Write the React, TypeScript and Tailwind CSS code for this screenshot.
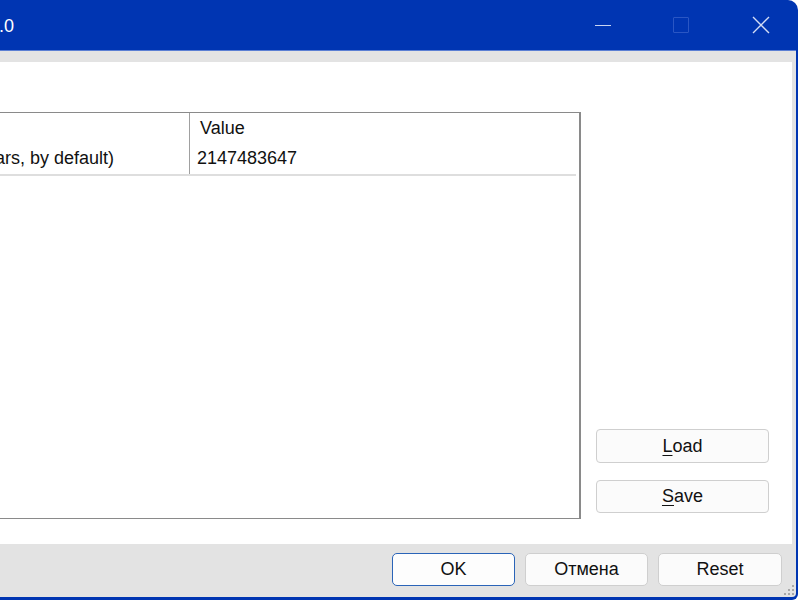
import React from "react";

export default function App() {
  return (
    <div className="w-[800px] h-[600px] bg-white overflow-hidden font-['Liberation_Sans',Arial,sans-serif] text-[#111]">
      <div className="w-[798px] h-[600px] bg-[#0035b2] rounded-tr-[10px] rounded-br-[6px] flex flex-col">
        {/* Title bar */}
        <div className="h-[50px] flex items-center relative shrink-0">
          <span className="text-white text-[18px] leading-none ml-[-1px] mt-[2px]">.0</span>
          <div className="ml-auto flex items-center h-full">
            <div className="w-[78px] h-full flex items-center justify-center">
              <div className="w-[16px] h-[1.5px] bg-[#c9d5f2] mt-[1px]" />
            </div>
            <div className="w-[78px] h-full flex items-center justify-center">
              <div className="w-[16px] h-[16px] border border-[#2a56c4] rounded-[1px]" />
            </div>
            <div className="w-[82px] h-full flex items-center justify-center mr-[-4px]">
              <svg width="18" height="18" viewBox="0 0 18 18">
                <path d="M1 1 L17 17 M17 1 L1 17" stroke="#d3ddf5" strokeWidth="1.4" fill="none" />
              </svg>
            </div>
          </div>
        </div>
        {/* Body */}
        <div className="flex-1 flex flex-col bg-[#e3e3e3] border-t border-[#5b7fd3] mr-[2px] mb-[3px] rounded-br-[4px] relative">
          <div className="h-[11px] shrink-0" />
          <div className="flex-1 bg-white mr-[4px] flex">
            {/* Table */}
            <div className="w-[581px] h-[407px] mt-[50px] border-t border-b border-r-2 border-t-[#8a8a8a] border-b-[#8a8a8a] border-r-[#8a8a8a] flex flex-col shrink-0">
              <div className="flex flex-col">
                <div className="flex h-[30px] text-[18px]">
                  <div className="w-[190px] border-r border-[#a0a0a0]" />
                  <div className="flex items-center pl-[10px] pt-[1px]">Value</div>
                </div>
                <div className="flex h-[31px] text-[18px]">
                  <div className="w-[190px] border-r border-[#a0a0a0] flex items-center whitespace-nowrap">
                    <span className="ml-[-5px]">ars, by default)</span>
                  </div>
                  <div className="flex items-center pl-[7px]">2147483647</div>
                </div>
                <div className="h-[2px] bg-[#dedede] mr-[3px]" />
              </div>
            </div>
            {/* Right buttons */}
            <div className="ml-[15px] w-[173px] flex flex-col pt-[367px] gap-[17px]">
              <button className="h-[34px] rounded-[4px] border border-[#cfcfcf] bg-[#fbfbfb] text-[18px] flex items-center justify-center">
                <span>
                  <span className="underline underline-offset-[3px] decoration-1">L</span>oad
                </span>
              </button>
              <button className="h-[33px] rounded-[4px] border border-[#cfcfcf] bg-[#fbfbfb] text-[18px] flex items-center justify-center">
                <span>
                  <span className="underline underline-offset-[3px] decoration-1">S</span>ave
                </span>
              </button>
            </div>
          </div>
          {/* Footer */}
          <div className="h-[53px] shrink-0 flex justify-end items-start pt-[9px] pr-[14px] gap-[10px]">
            <button className="w-[123px] h-[33px] rounded-[5px] border-[1.5px] border-[#2a64b8] bg-[#fdfdfd] text-[18px] flex items-center justify-center">
              OK
            </button>
            <button className="w-[123px] h-[33px] rounded-[5px] border border-[#cfcfcf] bg-[#fbfbfb] text-[18px] flex items-center justify-center">
              Отмена
            </button>
            <button className="w-[124px] h-[33px] rounded-[5px] border border-[#cfcfcf] bg-[#fbfbfb] text-[18px] flex items-center justify-center">
              Reset
            </button>
          </div>
          {/* Resize grip */}
          <svg className="absolute right-[1px] bottom-[1px]" width="12" height="12" viewBox="0 0 12 12">
            <rect x="9" y="1" width="2" height="2" fill="#a8a8a8" />
            <rect x="5" y="5" width="2" height="2" fill="#a8a8a8" />
            <rect x="9" y="5" width="2" height="2" fill="#a8a8a8" />
            <rect x="1" y="9" width="2" height="2" fill="#a8a8a8" />
            <rect x="5" y="9" width="2" height="2" fill="#a8a8a8" />
            <rect x="9" y="9" width="2" height="2" fill="#a8a8a8" />
          </svg>
        </div>
      </div>
    </div>
  );
}
